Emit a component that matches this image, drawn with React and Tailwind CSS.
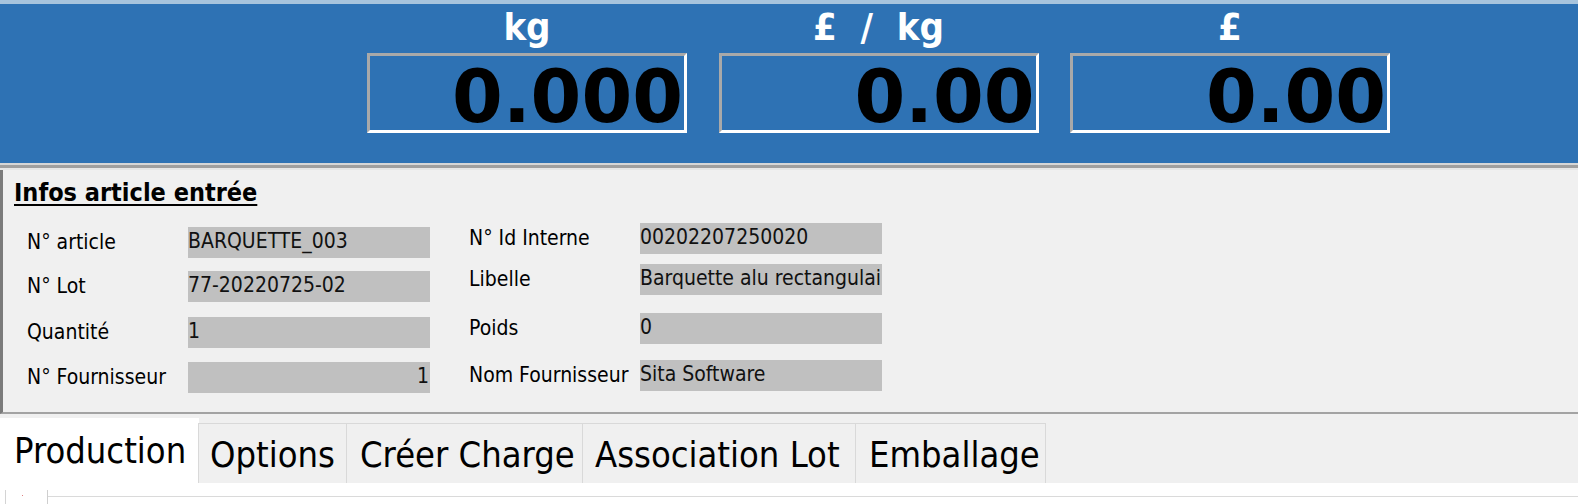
import React from 'react';

const displays = [
  { label: 'kg', value: '0.000' },
  { label: '£  /  kg', value: '0.00' },
  { label: '£', value: '0.00' },
];

const leftFields = [
  { label: 'N° article', value: 'BARQUETTE_003', mt: 'mt-0' },
  { label: 'N° Lot', value: '77-20220725-02', mt: 'mt-[13px]' },
  { label: 'Quantité', value: '1', mt: 'mt-[15px]' },
  { label: 'N° Fournisseur', value: '1', mt: 'mt-[14px]', right: true },
];

const rightFields = [
  { label: 'N° Id Interne', value: '00202207250020', mt: 'mt-0' },
  { label: 'Libelle', value: 'Barquette alu rectangulaire', mt: 'mt-[10px]' },
  { label: 'Poids', value: '0', mt: 'mt-[18px]' },
  { label: 'Nom Fournisseur', value: 'Sita Software', mt: 'mt-[16px]' },
];

const tabs = [
  { name: 'Production', w: 'w-[199px]', pl: 'pl-[14px]', active: true },
  { name: 'Options', w: 'w-[149px]', pl: 'pl-[11px]' },
  { name: 'Créer Charge', w: 'w-[237px]', pl: 'pl-[13px]' },
  { name: 'Association Lot', w: 'w-[274px]', pl: 'pl-[12px]' },
  { name: 'Emballage', w: 'w-[191px]', pl: 'pl-[13px]' },
];

function Field({ label, value, mt, right, labelW }) {
  return (
    <div className={`flex items-center h-[31px] ${mt}`}>
      <div className={`${labelW} shrink-0 text-[21px] leading-none text-black whitespace-nowrap`}>{label}</div>
      <div
        className={`w-[242px] h-[31px] bg-[#c0c0c0] flex items-center pb-[3px] overflow-hidden whitespace-nowrap text-[21px] leading-none text-[#111] ${
          right ? 'justify-end pr-[1px]' : ''
        }`}
      >
        {value}
      </div>
    </div>
  );
}

export default function App() {
  return (
    <div className="w-[1578px] h-[504px] overflow-hidden bg-[#f0f0f0] font-['DejaVu_Sans_Condensed','DejaVu_Sans',sans-serif] font-stretch-condensed">
      {/* top strip */}
      <div className="h-[4px] bg-[#a7c4dd]" />

      {/* display header */}
      <div className="h-[159px] bg-[#2e72b4] flex pl-[367px] gap-[31.5px]">
        {displays.map((d) => (
          <div key={d.value + d.label} className="w-[320px] flex flex-col">
            <div className="h-[49px] flex items-center justify-center pb-[4px] text-white font-bold text-[38px] leading-none whitespace-pre">
              {d.label}
            </div>
            <div className="h-[80px] border-[3px] border-t-[#a9a9a9] border-l-[#a9a9a9] border-r-white border-b-white flex items-start justify-end pt-[4px] pr-[1px]">
              <span className="font-['DejaVu_Sans',sans-serif] font-stretch-normal font-bold text-[73px] leading-none text-black">
                {d.value}
              </span>
            </div>
          </div>
        ))}
      </div>

      {/* separator */}
      <div className="h-[2px] bg-[#d6d6d6]" />
      <div className="h-[3px] bg-[#9f9f9f]" />
      <div className="h-[2px] bg-[#e6e6e6]" />

      {/* infos article */}
      <div className="h-[244px] border-l-[3px] border-l-[#7b7b7b] border-b-2 border-b-[#a3a3a3] pt-[10px] pl-[11px]">
        <div className="text-[25px] font-bold leading-none underline underline-offset-[3px] decoration-[2px] text-black">
          Infos article entrée
        </div>
        <div className="flex items-start pl-[13px]">
          <div className="pt-[22px]">
            {leftFields.map((f) => (
              <Field key={f.label} {...f} labelW="w-[161px]" />
            ))}
          </div>
          <div className="pt-[18px] ml-[39px]">
            {rightFields.map((f) => (
              <Field key={f.label} {...f} labelW="w-[171px]" />
            ))}
          </div>
        </div>
      </div>

      {/* tabs */}
      <div className="h-[69px] flex items-end">
        {tabs.map((t) =>
          t.active ? (
            <div
              key={t.name}
              className={`${t.w} ${t.pl} h-[65px] bg-white flex items-center text-[36px] leading-none text-black whitespace-nowrap`}
            >
              {t.name}
            </div>
          ) : (
            <div
              key={t.name}
              className={`${t.w} ${t.pl} h-[60px] -ml-px border border-[#d9d9d9] border-b-0 bg-[#f0f0f0] flex items-center pt-[3px] text-[36px] leading-none text-black whitespace-nowrap`}
            >
              {t.name}
            </div>
          )
        )}
      </div>

      {/* tab page top */}
      <div className="h-[21px] bg-white relative">
        <div className="h-[13px]" />
        <div className="h-px bg-[#dadada] ml-[47px]" />
        <div className="absolute left-[5px] top-[7px] w-px h-[14px] bg-[#d4d4d4]" />
        <div className="absolute left-[22px] top-[12px] w-px h-px bg-[#e08080]" />
        <div className="absolute left-[47px] top-[7px] w-px h-[14px] bg-[#cfcfcf]" />
      </div>
    </div>
  );
}
